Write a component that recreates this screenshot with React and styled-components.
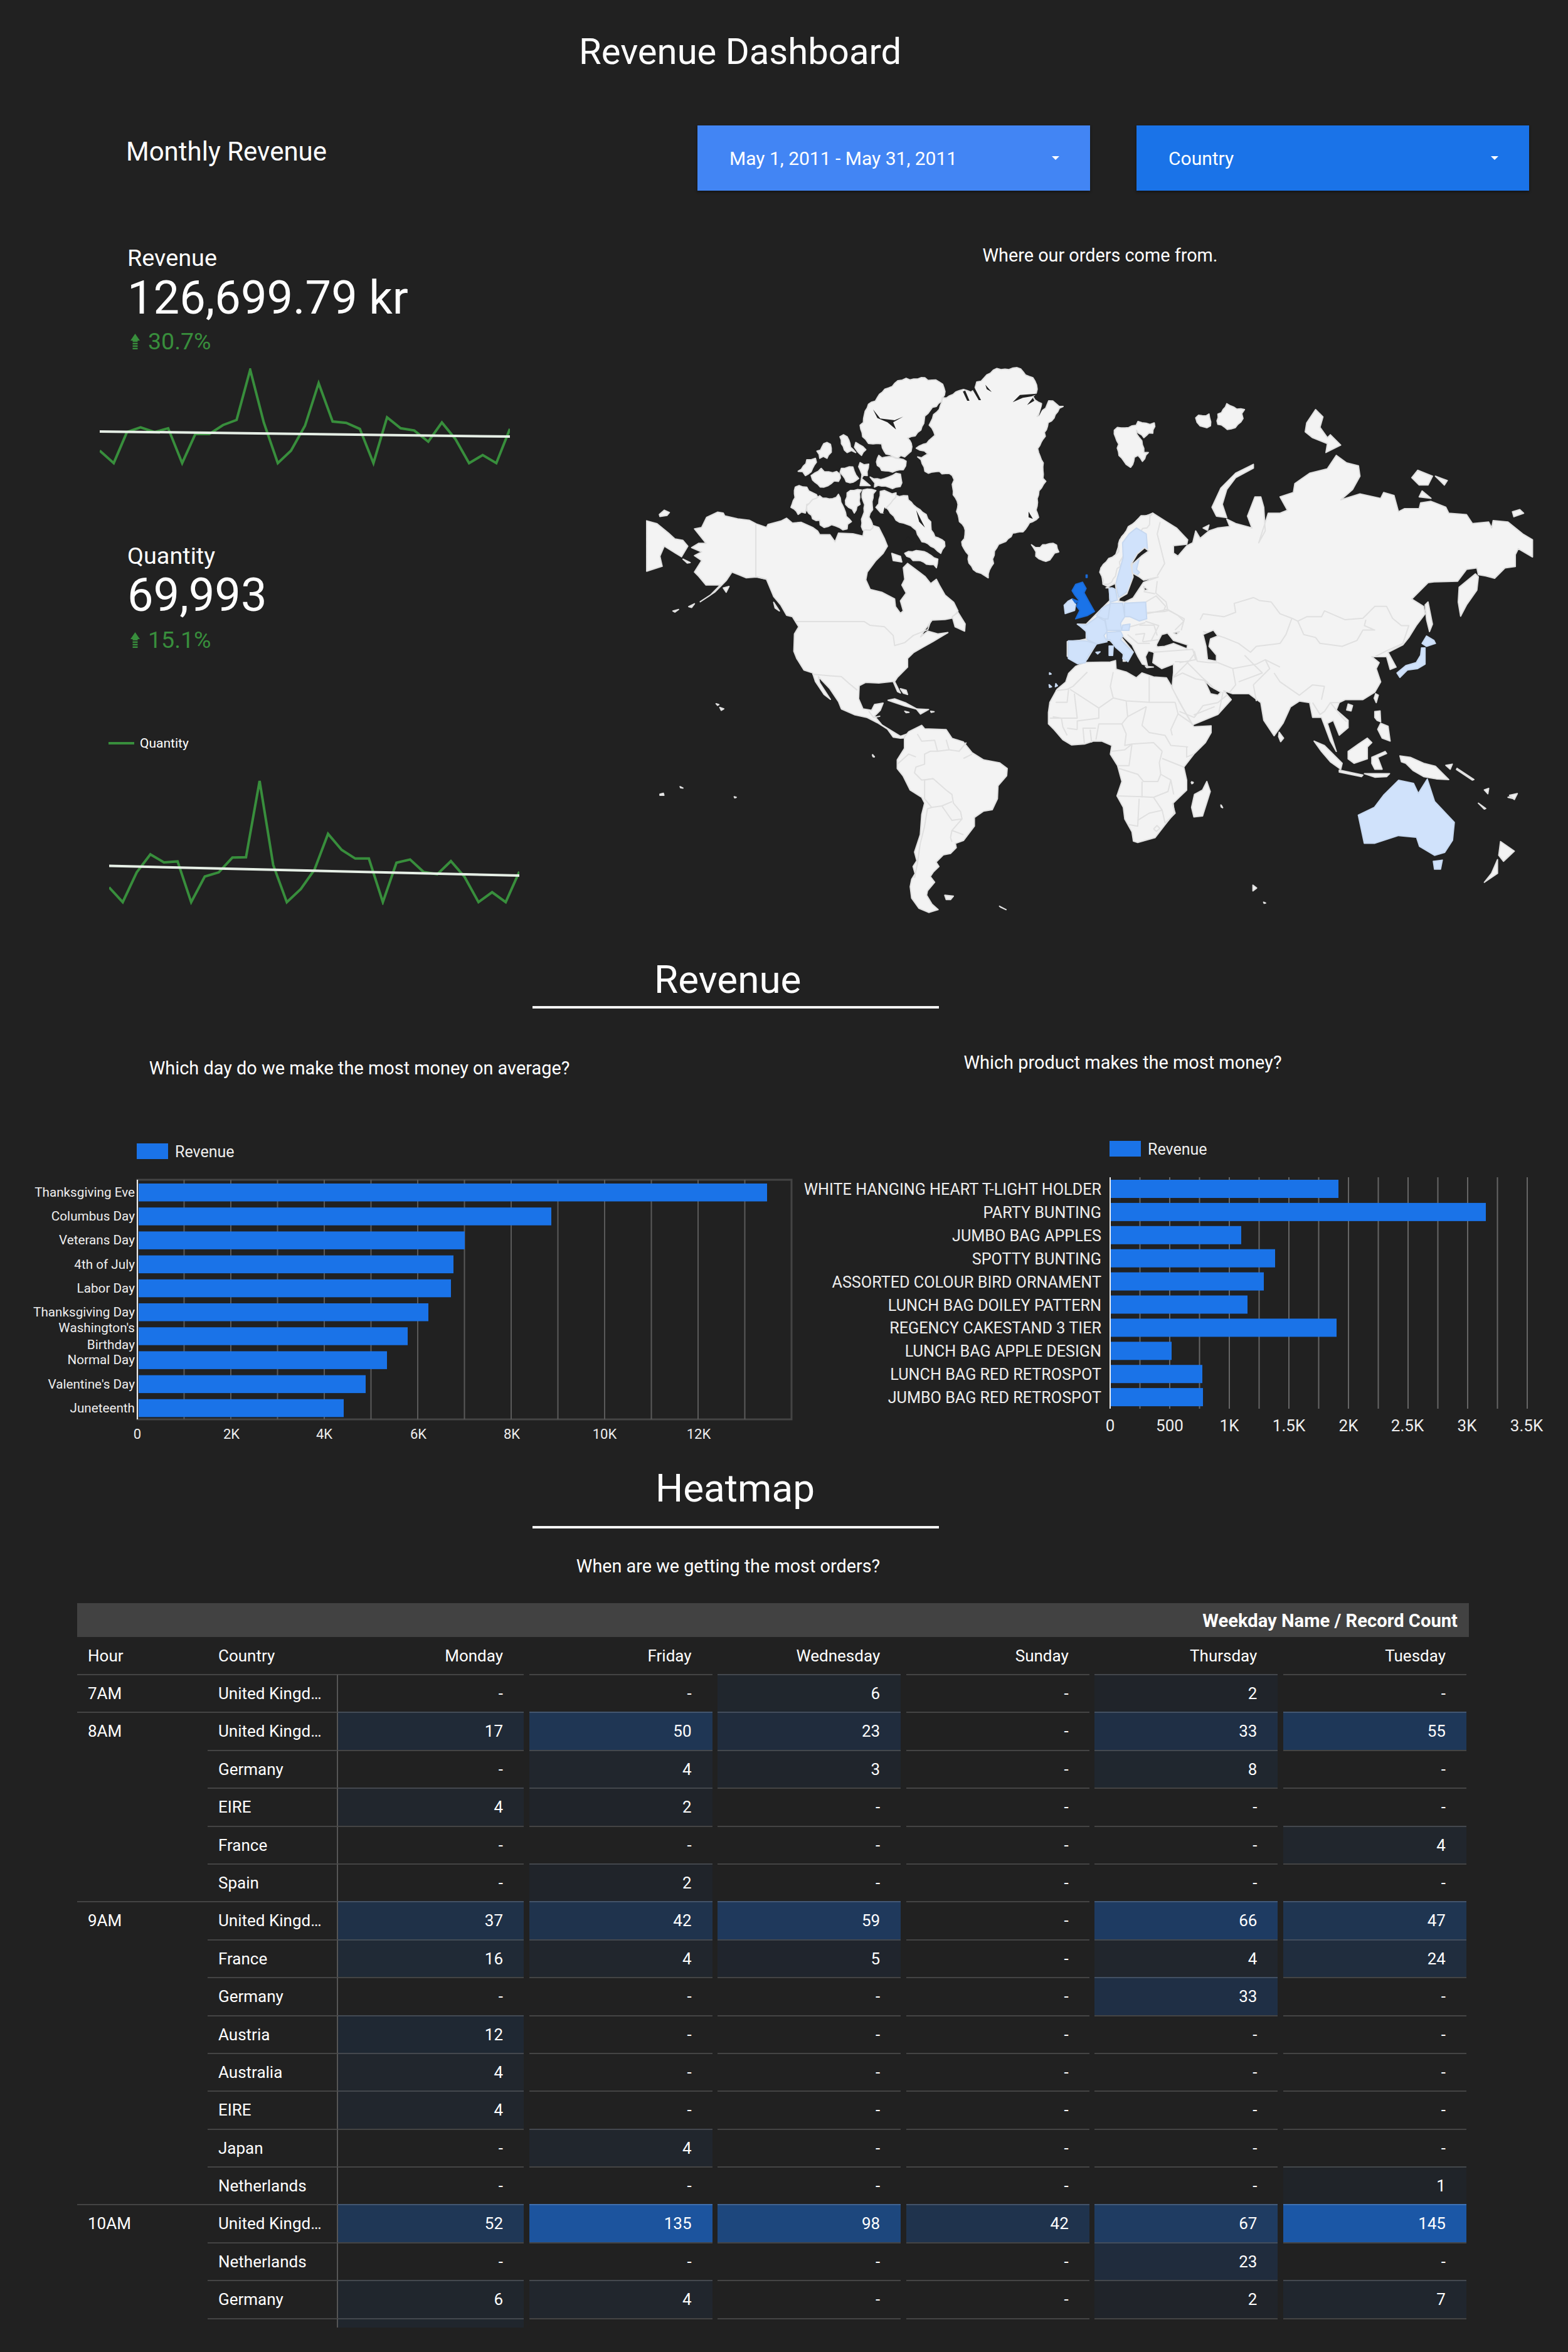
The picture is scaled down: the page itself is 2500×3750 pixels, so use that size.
import React from 'react';
import styled, { createGlobalStyle } from 'styled-components';

const GlobalStyle = createGlobalStyle`
  html, body { margin: 0; padding: 0; background: #212121; }
  body { font-family: Roboto, "Liberation Sans", sans-serif; color: #fff; }
`;

const Page = styled.div`
  width: 2500px;
  height: 3750px;
  overflow: hidden;
  background: #212121;
`;

const Title = styled.h1`
  margin: 0;
  height: 200px;
  padding: 48px 0 0 923px;
  box-sizing: border-box;
  font-size: 58px;
  line-height: 68px;
  font-weight: 400;
`;

const TopRow = styled.div`
  display: flex;
  align-items: center;
  height: 104px;
  padding-left: 201px;
`;

const SubTitle = styled.div`
  flex: none;
  width: 911px;
  font-size: 42px;
  line-height: 56px;
  margin-top: -20px;
`;

const Select = styled.div`
  flex: none;
  display: flex;
  align-items: center;
  justify-content: space-between;
  width: 626px;
  height: 104px;
  margin-right: 74px;
  padding: 0 49px 0 51px;
  box-sizing: border-box;
  background: ${(p) => p.$bg};
  box-shadow: 0 2px 4px rgba(0, 0, 0, 0.45);
  font-size: 30px;
`;

const Caret = styled.span`
  width: 0;
  height: 0;
  border-left: 6px solid transparent;
  border-right: 6px solid transparent;
  border-top: 6px solid #fff;
`;

const Overview = styled.div`
  display: flex;
  height: 1166px;
`;

const KpiColumn = styled.div`
  width: 1030px;
  flex: none;
`;

const Kpi = styled.div`
  padding-top: ${(p) => p.$top}px;
  padding-left: 203px;
`;

const KpiLabel = styled.div`
  font-size: 37.8px;
  line-height: 40px;
`;

const KpiValue = styled.div`
  margin-top: ${(p) => p.$gap}px;
  font-size: 74px;
  line-height: 80px;
`;

const Delta = styled.div`
  display: flex;
  align-items: center;
  gap: 13px;
  margin-top: ${(p) => p.$gap}px;
  padding-left: 5px;
  color: #388e3c;
  font-size: 37.5px;
  line-height: 40px;
`;

const Spark = styled.svg`
  display: block;
  width: 654px;
  height: ${(p) => p.$h}px;
  margin-left: ${(p) => p.$x}px;
  margin-top: ${(p) => p.$top}px;
  polyline, line { vector-effect: non-scaling-stroke; fill: none; }
`;

const LegendRow = styled.div`
  display: flex;
  align-items: center;
  gap: 9px;
  margin: 130px 0 0 173px;
  font-size: 21px;
  line-height: 30px;
`;

const LegendLine = styled.span`
  width: 41px;
  height: 4px;
  background: #388e3c;
`;

const MapColumn = styled.div`
  flex: 1;
`;

const Caption = styled.div`
  font-size: 28.8px;
  line-height: 40px;
  text-align: center;
  width: ${(p) => p.$width}px;
  box-sizing: border-box;
  padding-top: ${(p) => p.$top}px;
`;

const MapSvg = styled.svg`
  display: block;
  width: 1420px;
  height: 900px;
  margin-top: 143px;
  * { vector-effect: non-scaling-stroke; stroke-linejoin: round; }
`;

const SectionHeading = styled.h2`
  margin: 0;
  padding-left: ${(p) => p.$x}px;
  padding-top: ${(p) => p.$top}px;
  font-size: 62px;
  line-height: 70px;
  font-weight: 400;
`;

const Rule = styled.div`
  width: 648px;
  height: 4px;
  margin-left: 849px;
  margin-top: ${(p) => p.$top}px;
  background: #f4f4f4;
`;

const ChartRow = styled.div`
  display: flex;
`;

const ChartColumn = styled.div`
  width: ${(p) => p.$width}px;
  flex: none;
`;

const Question = styled.div`
  width: ${(p) => p.$width}px;
  height: 192px;
  padding-top: ${(p) => p.$top}px;
  box-sizing: border-box;
  font-size: 28.9px;
  line-height: 40px;
  text-align: center;
`;

const ChartSvg = styled.svg`
  display: block;
  width: ${(p) => p.$width}px;
  height: 510px;
  text { fill: #eee; font-family: Roboto, "Liberation Sans", sans-serif; }
`;

const Table = styled.div`
  width: 2219px;
  margin: 39px 0 0 123px;
`;

const TableBand = styled.div`
  height: 54px;
  padding-right: 18px;
  background: #424242;
  font-size: 29.2px;
  font-weight: 700;
  line-height: 56px;
  text-align: right;
`;

const ROW_COLUMNS = '208px 208px 296px repeat(5, 300.6px)';

const HeaderRow = styled.div`
  display: grid;
  width: 2215px;
  grid-template-columns: ${ROW_COLUMNS};
  height: 59px;
  font-size: 26px;
  align-items: center;
`;

const HeadCell = styled.div`
  padding: 0 ${(p) => (p.$right ? 33 : 0)}px 0 ${(p) => (p.$right ? 0 : 17)}px;
  text-align: ${(p) => (p.$right ? 'right' : 'left')};
`;

const BodyRow = styled.div`
  display: grid;
  width: 2215px;
  grid-template-columns: ${ROW_COLUMNS};
  height: ${(p) => (p.$partial ? 15 : 60.4)}px;
  font-size: 26px;
`;

const HourCell = styled.div`
  padding-left: 17px;
  border-top: 2px solid ${(p) => (p.$first ? 'rgba(255,255,255,0.16)' : 'transparent')};
  line-height: 58px;
  overflow: hidden;
`;

const CountryCell = styled.div`
  padding-left: 17px;
  box-sizing: border-box;
  border-top: 2px solid rgba(255, 255, 255, 0.16);
  border-right: 2px solid #555;
  line-height: 58px;
  white-space: nowrap;
`;

const ValueCell = styled.div`
  margin-left: ${(p) => (p.$first ? 0 : 8.6)}px;
  padding-right: 33px;
  box-sizing: border-box;
  border-top: 2px solid rgba(255, 255, 255, 0.16);
  background: ${(p) => (p.$value ? `rgba(26, 115, 232, ${Math.min(1, 0.04 + p.$value / 230)})` : 'transparent')};
  line-height: 58px;
  text-align: right;
  overflow: hidden;
`;

const SPARK_REVENUE = '250,1408 285,1447 318,1350 352,1335 387,1350 421,1338 456,1447 489,1356 524,1356 558,1328 592,1312 626,1155 660,1320 695,1447 728,1408 763,1330 797,1197 832,1317 866,1321 900,1340 934,1447 968,1304 1002,1338 1036,1345 1071,1380 1105,1320 1139,1372 1173,1447 1207,1422 1241,1447 1275,1340';
const SPARK_QUANTITY = '273,1205 307,1251 342,1158 376,1102 410,1127 444,1124 478,1251 512,1171 547,1158 581,1112 615,1111 649,873 683,1135 717,1251 752,1210 786,1150 820,1038 854,1088 888,1115 922,1115 957,1251 991,1128 1025,1118 1059,1157 1093,1164 1127,1123 1161,1172 1196,1251 1230,1220 1264,1251 1298,1156';

const UpArrow = () => (
  <svg width="15" height="25" viewBox="0 0 15 25">
    <path d="M7.5 0 L15 11 H11.5 V13 H3.5 V11 H0 Z" fill="#388e3c" />
    <rect x="3.5" y="14.5" width="8" height="2.5" fill="#388e3c" />
    <rect x="3.5" y="18.5" width="8" height="2.5" fill="#388e3c" />
    <rect x="3.5" y="22.5" width="8" height="2.5" fill="#388e3c" />
  </svg>
);

const Sparkline = ({ points, trend, box, h, x, top }) => (
  <Spark viewBox={box} preserveAspectRatio="none" $h={h} $x={x} $top={top}>
    <polyline points={points} stroke="#388e3c" strokeWidth="4" />
    <line x1={trend[0]} y1={trend[1]} x2={trend[2]} y2={trend[3]} stroke="#e6efe6" strokeWidth="4" />
  </Spark>
);

// world map, traced per zoom crop so each group keeps the crop's own coordinates
const LAND = '#f3f3f3';
const EDGE = '#e0e0e0';
const SEA = '#212121';
const PALE = '#d0e2fb';

// zigzags long edges, the arctic coasts in the picture are all spikes
const rough = (pts, amp) => {
  const xy = pts.split(' ').map((p) => p.split(',').map(Number));
  const out = [];
  xy.forEach(([x, y], i) => {
    const [nx, ny] = xy[(i + 1) % xy.length];
    const len = Math.hypot(nx - x, ny - y);
    const steps = Math.max(1, Math.round(len / 13));
    for (let s = 0; s < steps; s++) {
      const wob = s === 0 ? 0 : amp * Math.sin(x * 0.7 + y * 1.3 + s * 2.4) * (s % 2 ? 1 : -0.5);
      out.push(`${(x + ((nx - x) * s) / steps + (-(ny - y) / len) * wob).toFixed(1)},${(y + ((ny - y) * s) / steps + ((nx - x) / len) * wob).toFixed(1)}`);
    }
  });
  return out.join(' ');
};

const ARCTIC = [
  '860,470 930,480 960,520 1000,560 1020,610 1058,640 1045,680 1010,655 980,640 960,600 930,580 890,565 870,540 855,520',
  '920,680 960,670 1000,680 1035,700 1030,730 985,710 940,695',
  '805,155 885,90 925,72 990,70 1040,85 1060,118 1030,170 1000,195 965,260 930,280 945,310 920,345 895,350 855,335 840,300 810,300 785,285 765,235 790,175',
  '830,340 890,350 925,360 915,390 840,392 825,375',
  '550,395 580,355 610,350 600,385 575,410',
  '615,325 650,295 665,315 650,350 625,350',
  '595,410 630,385 670,400 695,405 690,430 640,450 600,425',
  '695,275 720,275 750,330 720,330',
  '750,295 785,320 770,340 755,325',
  '700,385 740,380 760,420 730,435 705,410',
  '765,365 795,370 790,410 770,420',
  '800,415 850,420 905,405 910,435 890,450 815,450',
  '835,465 890,470 850,540 820,520',
  '775,460 820,462 800,540 810,590 775,600',
  '525,520 540,450 580,450 620,490 580,510 575,540 550,545',
  '590,505 625,480 670,490 690,475 705,515 735,570 720,595 680,585 640,590 625,565 600,560 580,530',
  '720,470 770,460 765,510 745,540 715,510',
  '1050,140 1110,115 1150,120 1170,85 1205,60 1240,38 1310,35 1365,70 1380,110 1365,135 1395,160 1380,205 1420,150 1470,170 1430,220 1405,260 1385,330 1410,430 1380,490 1385,555 1340,595 1295,610 1240,660 1225,700 1210,765 1170,745 1140,700 1118,640 1130,600 1110,570 1105,510 1085,440 1085,410 1040,395 990,395 965,345 1000,335 960,315 1025,270 1005,235 1040,180',
  '1360,650 1390,660 1435,645 1455,675 1410,708 1375,690',
];

const ARCTIC_SLITS = [
  '810,180 835,212 885,218 915,205 880,225 890,250 860,225 825,210',
  '1130,115 1145,150 1137,150 1122,118',
  '1160,100 1185,148 1177,148 1152,105',
  '1200,95 1222,120 1205,110',
  '1295,155 1320,130 1385,125 1360,135 1330,140',
  '1345,165 1365,140 1370,150',
  '1385,205 1400,155 1408,160',
  '1350,535 1365,560 1350,555',
  '960,530 990,590 970,570',
  '930,620 950,640 920,640',
  '850,520 870,555 845,540',
];

const AMERICAS_NORTH = [
  '24,567 60,577 100,610 122,630 150,635 167,655 145,692 125,680 85,655 70,690 78,725 24,742',
  '68,545 85,530 103,538 95,548 70,552',
  '190,595 215,590 232,555 270,537 290,540 295,550 340,560 380,565 405,578 440,590 445,580 490,568 510,558 530,575 560,572 600,590 618,603 625,615 660,615 678,640 690,610 740,612 775,620 780,590 800,580 830,590 850,630 860,655 845,680 820,705 790,745 785,772 800,805 840,815 885,838 888,865 905,888 915,880 905,845 925,818 910,790 920,770 915,730 930,715 970,745 990,760 1010,785 1030,770 1040,790 1060,825 1090,850 1105,880 1085,905 1060,910 1015,912 990,945 975,970 1000,950 1035,960 1070,955 1020,985 985,1005 950,1025 930,1045 930,1075 895,1110 885,1125 905,1165 895,1160 880,1125 830,1130 785,1128 762,1140 760,1185 775,1220 805,1225 815,1205 845,1200 835,1225 815,1245 840,1275 880,1300 905,1315 925,1308 930,1320 905,1322 880,1318 860,1290 825,1268 790,1250 745,1240 700,1220 690,1195 660,1150 620,1108 625,1130 662,1187 640,1170 610,1125 600,1095 570,1085 545,1045 535,1020 537,960 552,935 530,900 510,895 490,860 465,830 440,770 405,762 370,765 345,755 320,745 300,775 260,815 210,848 245,825 280,790 268,790 230,790 205,760 190,745 215,705 190,688 215,675 180,660 205,645 230,645',
  '875,680 905,690 910,710 880,705',
  '770,420 800,445 765,445',
  '862,1190 885,1185 925,1200 965,1222 920,1210',
  '960,1220 1003,1222 975,1238',
  '920,1228 935,1232 925,1233',
  '1010,1228 1022,1230 1012,1232',
  '905,1150 925,1155 930,1170 915,1165',
  '1085,900 1105,885 1130,925 1128,950 1095,935',
  '465,850 485,880 470,870',
  '170,865 190,855 180,868',
  '115,880 135,875 122,884',
  '150,700 175,712 165,714',
  '290,800 310,795 300,815',
  '265,1202 275,1205 270,1208',
  '278,1215 292,1220 283,1225',
  '70,1516 82,1513 84,1520 70,1520',
  '140,1490 150,1495 142,1494',
  '328,1525 335,1527 330,1529',
  '808,1380 815,1386 810,1386',
];

const AMERICAS_NORTH_BORDERS = [
  '403,580 403,760 440,770',
  '540,917 780,917 800,930 850,935 880,965 885,1000 920,990 950,965 1000,945 1010,915',
  '600,1100 660,1105 700,1108 725,1130 755,1155',
  '795,1228 812,1250 835,1245',
];

const SOUTH_ATLANTIC = [
  '135,250 150,232 195,210 205,222 280,225 300,255 340,268 370,305 410,330 465,340 492,360 490,385 460,420 458,465 440,503 410,508 378,530 378,560 340,610 312,620 315,635 295,655 270,660 245,685 255,700 235,720 225,735 240,755 215,785 212,800 230,830 252,850 220,860 185,845 160,810 155,770 160,745 172,725 165,700 178,680 170,650 190,590 195,520 205,480 195,460 155,435 130,385 110,360 110,330 135,290',
  '635,165 640,130 665,85 695,60 705,30 730,5 760,-8 850,-10 868,-15 870,15 905,25 940,45 960,28 1000,42 1045,45 1060,70 1090,130 1130,200 1140,215 1200,212 1200,235 1180,270 1140,310 1105,355 1115,400 1115,435 1068,480 1072,515 1040,555 1005,600 945,617 930,612 925,580 900,535 895,495 873,455 890,405 875,350 850,310 855,280 820,265 790,265 760,275 715,278 685,260 655,225 635,205',
  '1185,405 1197,440 1170,525 1140,528 1132,495 1142,450 1170,435',
  '275,800 305,803 295,815 280,815',
  '465,838 488,850 470,842',
  '25,312 30,320 26,318',
  '1345,765 1358,775 1345,785',
  '1382,824 1389,827 1384,828',
  '1235,487 1240,496 1236,494',
  '1132,406 1138,408 1134,411',
];

const SOUTH_ATLANTIC_BORDERS = [
  '180,240 195,265 240,262 250,300 225,300 205,310 205,345 175,355 170,375 195,400 235,395 280,435 300,450 305,480 330,510 335,535 300,575 295,600 300,615',
  '230,495 215,500 205,560 190,620 180,690 170,740',
  '235,395 205,400 205,465 230,495 265,490 300,475',
  '110,345 150,310 175,320',
  '280,260 290,295 325,300 350,270',
  '250,300 290,295',
  '340,325 370,310',
  '265,490 300,540 335,535',
  '300,575 340,590',
  '770,25 720,75 700,85 660,90',
  '710,85 810,150 860,115 850,75 860,25',
  '660,130 700,130 705,85',
  '725,100 735,185 680,185 650,180',
  '810,150 810,185 735,195 735,225',
  '860,115 905,125 985,130 1075,130',
  '985,40 985,130',
  '905,125 910,180 890,205 810,205 800,260',
  '975,145 960,210 985,235 1040,245 1060,280 1120,285',
  '910,180 975,145',
  '1075,130 1085,170 1060,225 1065,245',
  '1085,170 1135,205',
  '890,205 905,240 900,280 925,275 1000,270 1030,300',
  '855,300 900,295 925,275',
  '925,275 915,350 875,350',
  '1030,300 1020,340 1025,380 1060,400 1070,450',
  '1030,325 1105,355',
  '1115,285 1115,320 1140,310',
  '880,360 945,380 965,405 1015,405 1025,380',
  '873,455 960,458 1000,460 1050,440 1060,400',
  '960,405 960,460',
  '950,465 945,560 915,555',
  '1000,460 1030,505 1040,550',
  '1040,550 1075,515 1065,480',
  '945,540 985,515 1030,505',
  '1000,570 1012,558 1022,568 1010,578 1000,570',
  '760,275 755,220 800,220',
  '780,225 785,270',
  '640,185 680,185 685,215 700,245',
  '735,225 700,220',
];

const EURASIA = [
  '250,420 290,445 330,470 368,510 365,525 320,530 320,555 335,565 365,530 385,520 395,480 410,505 440,480 470,470 510,465 500,440 530,455 585,470 570,430 595,365 615,365 625,400 630,480 608,520 640,420 680,420 705,410 680,365 725,350 730,320 780,285 840,270 870,225 905,250 945,260 950,295 925,340 885,375 950,355 1020,370 1030,350 1065,360 1080,415 1100,405 1150,405 1155,385 1190,380 1240,400 1250,420 1310,425 1330,455 1385,450 1395,470 1400,445 1450,450 1500,490 1533,510 1533,568 1485,540 1475,560 1475,600 1440,605 1405,640 1375,632 1350,628 1345,605 1310,610 1280,650 1200,652 1180,655 1125,710 1165,735 1170,760 1140,800 1115,840 1095,865 1045,890 1072,940 1052,948 1040,905 1005,905 990,905 1015,925 1005,945 1020,990 1000,1025 960,1050 900,1050 880,1060 870,1085 910,1120 910,1145 880,1170 860,1120 840,1130 870,1225 850,1190 820,1110 790,1110 780,1060 745,1055 715,1075 690,1130 660,1172 625,1120 615,1060 575,1030 520,1030 490,1020 515,1050 470,1100 385,1135 350,1075 315,1010 320,958 320,930 280,945 250,925 255,890 235,885 225,905 232,935 215,930 200,905 180,865 148,835 143,838 184,889 180,895 165,885 158,920 150,920 150,895 120,865 105,850 85,850 60,861 28,914 -3,928 -39,903 -39,854 0,850 25,845 25,815 -5,795 25,795 45,775 75,745 105,715 103,675 113,672 128,700 126,656 99,669 82,660 75,605 125,560 145,500 200,440',
  '1285,670 1340,625 1350,635 1345,680 1310,730 1290,768 1282,720',
  '1170,730 1180,720 1195,795 1185,820 1175,780',
  '450,400 480,335 530,285 590,255 590,268 530,300 500,340 485,390 500,435 465,430',
  '770,115 800,70 825,95 815,130 840,165 850,155 885,190 835,215 840,185 790,165 765,145',
  '1125,300 1145,275 1195,295 1180,325 1150,325',
  '1205,295 1245,310 1235,325',
  '1160,345 1190,370 1150,365',
  '1465,415 1490,408 1503,420 1470,432',
  '420,470 440,460 435,478',
  '1003,1030 1012,1035 1005,1060 998,1045',
  '910,1065 925,1070 920,1088 905,1085',
  '677,1160 692,1180 682,1192 675,1175',
  '1000,1090 1018,1088 1020,1125 1008,1120 1000,1110',
  '1020,1130 1045,1140 1052,1190 1025,1180 1010,1150',
  '975,1180 990,1195 975,1210 975,1250 930,1265 910,1250 910,1225 945,1200',
  '795,1190 830,1205 865,1240 890,1265 885,1285 850,1260 820,1225',
  '880,1288 960,1305 955,1310 880,1295',
  '965,1300 1050,1300 1040,1310 1000,1312',
  '990,1245 1035,1225 1040,1232 1010,1245 1025,1285 1000,1285 990,1265',
  '1085,1240 1120,1245 1165,1265 1205,1275 1250,1320 1210,1318 1165,1310 1130,1290 1105,1265 1090,1260',
  '1240,1272 1262,1268 1255,1285',
  '1278,1282 1335,1320 1330,1322 1276,1286',
  '1350,1400 1375,1418 1370,1420',
  '1370,1355 1385,1350 1382,1368',
  '1450,1380 1480,1370 1470,1385',
  '380,1330 386,1332 382,1334',
  '480,1406 485,1414 481,1412',
  '225,937 252,940 230,942',
];

const EURASIA_ROUGH = [
  '75,605 125,560 145,500 200,440 250,420 230,470 160,520 140,600 100,660 82,660',
  '120,140 180,125 200,110 255,115 250,150 220,165 195,140 220,215 235,215 215,245 200,225 175,265 160,255 130,200',
  '395,98 440,85 445,125 410,125',
  '470,85 500,50 560,70 555,100 515,135 470,120',
];

const EURASIA_SEAS = [
  '420,830 455,815 470,835 445,845 440,870 465,900 465,920 435,915 430,870',
  '262,865 280,830 300,825 320,850 368,865 365,878 320,860 290,870 265,872',
  '320,825 340,820 330,830',
  '425,985 445,1005 480,1025 470,1035 445,1030',
];

const EURASIA_BORDERS = [
  '410,780 420,760 490,770 530,755 525,725 590,705 610,715 650,720 680,760 720,775 740,785',
  '740,785 770,770 820,770 830,750 900,780 960,775 1000,735 1040,735 1060,775 1090,800 1115,800 1095,860 1040,885 1000,905',
  '740,785 760,830 800,840 815,860 890,870 940,850 960,815 1000,815 965,800 970,780',
  '720,775 700,830 680,860 600,870 580,890 540,860 490,840 460,830 420,820',
  '390,885 400,920 440,925 470,925 520,945 530,1000 510,1025',
  '250,890 385,880 395,915 340,925',
  '320,975 350,960 395,980 425,985',
  '520,945 600,930 630,915 645,945 590,1000 600,1055',
  '680,940 630,915',
  '660,960 680,990 745,1035 790,1000 830,1005 820,1050',
  '790,1060 815,1100 830,1090 850,1060 880,1060',
  '850,1060 890,1110 905,1125',
  '340,1090 390,1110 420,1070 470,1060 500,1035',
  '275,450 265,490 290,590 265,632',
  '265,650 260,690 295,720 300,745 335,765 355,785 325,815',
  '230,760 300,745',
  '225,785 270,800 245,850',
  '150,810 225,790',
  '165,830 200,860 240,860',
  '560,900 620,960 540,990',
];

const EUROPE_SEAS = [
  '400,325 430,330 470,310 500,265 520,235 590,210 520,225 500,210 465,190 465,150 510,110 545,85 525,70 490,100 460,150 470,210 440,290 405,310',
  '520,255 540,270 525,275',
  '340,262 385,240 392,300 378,265 355,262',
];

const EUROPE_BORDERS = [
  '535,380 620,375 640,370 715,410 700,465',
  '530,330 580,300 625,350 615,375',
  '520,280 575,290',
  '500,440 570,440 585,490',
  '515,520 590,510',
  '480,485 525,480 515,520',
  '670,615 735,615 765,575',
  '660,690 730,620 800,690 860,745',
  '860,830 760,870',
  '900,760 880,860',
];

const EUROPE_PALE = [
  '355,265 370,262 385,270 395,320 360,330',
  '360,335 420,335 430,400 410,430 415,465 345,465 335,410 318,395',
  '320,360 345,345 360,340 350,410 330,410 295,395',
  '205,435 245,440 300,400 335,420 345,470 330,490 345,520 295,530 250,510 245,470',
  '428,335 530,330 535,410 500,420 455,400 430,400',
  '420,440 455,435 450,465 415,465',
  '345,475 410,470 420,490 410,510 470,570 445,615 420,600 425,580 385,545 360,510 345,510',
  '355,540 375,540 372,585 355,585',
  '292,570 312,568 300,578',
  '160,515 240,515 295,530 260,580 240,620 205,625 160,600',
  '180,315 195,340 190,370 145,385 140,345 160,325',
  '70,668 78,674 70,676',
  '68,725 80,735 70,738',
  '100,720 108,730 98,735',
];

const UK_PARTS = [
  '228,235 245,265 235,285 265,340 285,375 250,395 195,410 215,370 200,350 210,320 190,295 178,275 195,245',
  '180,315 205,325 195,335',
  '245,200 250,200 250,212 245,212',
];

const JAPAN_AND_SWEDEN = [
  '130,640 150,570 148,520 170,490 195,470 228,490 232,540 205,570 195,610 205,620 180,650 170,680 135,705 125,660',
  '1160,860 1175,835 1200,850 1205,860 1175,870',
  '1158,875 1170,875 1170,930 1145,945 1110,950 1085,975 1075,960 1105,935 1140,925 1155,900',
];

const OCEANIA_PALE = [
  '1218,1358 1245,1345 1260,1325 1285,1300 1310,1305 1318,1322 1333,1298 1345,1335 1378,1370 1375,1400 1362,1420 1345,1425 1320,1410 1315,1395 1285,1392 1245,1405 1228,1405',
  '1343,1435 1358,1433 1355,1448 1345,1448',
];

const OCEANIA_LAND = [
  '1455,1402 1478,1418 1460,1435 1452,1425',
  '1450,1432 1440,1455 1428,1470 1450,1455',
  '1470,1325 1483,1322 1478,1332',
];

const Shapes = ({ list, fill, stroke, amp }) =>
  list.map((pts, i) => (
    <polygon key={i} points={amp ? rough(pts, amp) : pts} fill={fill} stroke={stroke} strokeWidth="2" />
  ));

const Lines = ({ list }) =>
  list.map((pts, i) => <polyline key={i} points={pts} fill="none" stroke="#e0e0e0" strokeWidth="2" />);

const WorldMap = () => (
  <MapSvg viewBox="1030 570 1420 900">
    <g transform="translate(1020 570) scale(0.4592)">
      <Shapes list={AMERICAS_NORTH} fill={LAND} stroke={EDGE} />
      <Shapes list={ARCTIC} fill={LAND} stroke={EDGE} amp={7} />
      <Shapes list={ARCTIC_SLITS} fill={SEA} stroke="none" />
      <Lines list={AMERICAS_NORTH_BORDERS} />
    </g>
    <g transform="translate(1380 1060) scale(0.4592)">
      <Shapes list={SOUTH_ATLANTIC} fill={LAND} stroke={EDGE} />
      <Lines list={SOUTH_ATLANTIC_BORDERS} />
    </g>
    <g transform="translate(1720 620) scale(0.4719)">
      <Shapes list={EURASIA} fill={LAND} stroke={EDGE} />
      <Shapes list={EURASIA_ROUGH} fill={LAND} stroke={EDGE} amp={7} />
      <Lines list={EURASIA_BORDERS} />
      <Shapes list={EURASIA_SEAS} fill={SEA} stroke={EDGE} />
      <Shapes list={JAPAN_AND_SWEDEN} fill={PALE} stroke="#c6d8f0" />
    </g>
    <g transform="translate(1650 850) scale(0.3333)">
      <Lines list={EUROPE_BORDERS} />
      <Shapes list={EUROPE_SEAS} fill={SEA} stroke={EDGE} />
      <Shapes list={EUROPE_PALE} fill={PALE} stroke="#c6d8f0" />
      <Shapes list={UK_PARTS} fill="#1a73e8" stroke="#1a6ad6" />
    </g>
    <g transform="translate(1000 0) scale(0.957)">
      <Shapes list={OCEANIA_PALE} fill={PALE} stroke="#c6d8f0" />
      <Shapes list={OCEANIA_LAND} fill={LAND} stroke={EDGE} />
    </g>
  </MapSvg>
);

const DAY_BARS = [
  ['Thanksgiving Eve', 1223],
  ['Columbus Day', 879],
  ['Veterans Day', 741],
  ['4th of July', 723],
  ['Labor Day', 719],
  ['Thanksgiving Day', 683],
  [["Washington's", 'Birthday'], 650],
  ['Normal Day', 617],
  ["Valentine's Day", 583],
  ['Juneteenth', 548],
];

const DAY_TICKS = [['0', 219], ['2K', 369], ['4K', 517], ['6K', 667], ['8K', 816], ['10K', 964], ['12K', 1114]];

const PRODUCT_BARS = [
  ['WHITE HANGING HEART T-LIGHT HOLDER', 2134],
  ['PARTY BUNTING', 2369],
  ['JUMBO BAG APPLES', 1979],
  ['SPOTTY BUNTING', 2033],
  ['ASSORTED COLOUR BIRD ORNAMENT', 2015],
  ['LUNCH BAG DOILEY PATTERN', 1989],
  ['REGENCY CAKESTAND 3 TIER', 2131],
  ['LUNCH BAG APPLE DESIGN', 1868],
  ['LUNCH BAG RED RETROSPOT', 1917],
  ['JUMBO BAG RED RETROSPOT', 1918],
];

const PRODUCT_TICKS = [['0', 1770], ['500', 1865], ['1K', 1960], ['1.5K', 2055], ['2K', 2150], ['2.5K', 2244], ['3K', 2339], ['3.5K', 2434]];

const DayChart = () => (
  <ChartSvg viewBox="0 1800 1270 510" $width={1270}>
    <rect x="218" y="1823" width="50" height="25" fill="#1a73e8" />
    <text x="279" y="1845" fontSize="25">Revenue</text>
    <rect x="219" y="1881" width="1043" height="382" fill="none" stroke="#444" strokeWidth="3" />
    {Array.from({ length: 13 }, (_, i) => (
      <line key={i} x1={219 + 74.5 * (i + 1)} x2={219 + 74.5 * (i + 1)} y1="1881" y2="2263" stroke="#5a5a5a" strokeWidth="2" />
    ))}
    {DAY_BARS.map(([label, end], i) => {
      const y = 1887 + 38.2 * i;
      return (
        <g key={i}>
          <rect x="221" y={y} width={end - 221} height="28.5" fill="#1a73e8" />
          {Array.isArray(label) ? (
            <text textAnchor="end" fontSize="20.7">
              <tspan x="215" y={y + 8}>{label[0]}</tspan>
              <tspan x="215" y={y + 35}>{label[1]}</tspan>
            </text>
          ) : (
            <text x="215" y={y + 21} textAnchor="end" fontSize="20.7">{label}</text>
          )}
        </g>
      );
    })}
    <line x1="219" x2="219" y1="1881" y2="2263" stroke="#eee" strokeWidth="2" />
    {DAY_TICKS.map(([t, x]) => (
      <text key={t} x={x} y="2294" textAnchor="middle" fontSize="22">{t}</text>
    ))}
  </ChartSvg>
);

const ProductChart = () => (
  <ChartSvg viewBox="1270 1800 1230 510" $width={1230}>
    <rect x="1769" y="1819" width="50" height="25" fill="#1a73e8" />
    <text x="1830" y="1841" fontSize="25">Revenue</text>
    {Array.from({ length: 14 }, (_, i) => (
      <line key={i} x1={1770 + 47.5 * (i + 1)} x2={1770 + 47.5 * (i + 1)} y1="1877" y2="2246" stroke="#666" strokeWidth="2" />
    ))}
    {PRODUCT_BARS.map(([label, end], i) => {
      const y = 1881 + 36.9 * i;
      return (
        <g key={label}>
          <rect x="1771" y={y} width={end - 1771} height="29" fill="#1a73e8" />
          <text x="1756" y={y + 24} textAnchor="end" fontSize="25.2">{label}</text>
        </g>
      );
    })}
    <line x1="1770" x2="1770" y1="1877" y2="2246" stroke="#eee" strokeWidth="2" />
    {PRODUCT_TICKS.map(([t, x]) => (
      <text key={t} x={x} y="2282" textAnchor="middle" fontSize="26">{t}</text>
    ))}
  </ChartSvg>
);

const DAYS = ['Monday', 'Friday', 'Wednesday', 'Sunday', 'Thursday', 'Tuesday'];

const UK = 'United Kingd…';

const ROWS = [
  ['7AM', UK, [0, 0, 6, 0, 2, 0]],
  ['8AM', UK, [17, 50, 23, 0, 33, 55]],
  ['', 'Germany', [0, 4, 3, 0, 8, 0]],
  ['', 'EIRE', [4, 2, 0, 0, 0, 0]],
  ['', 'France', [0, 0, 0, 0, 0, 4]],
  ['', 'Spain', [0, 2, 0, 0, 0, 0]],
  ['9AM', UK, [37, 42, 59, 0, 66, 47]],
  ['', 'France', [16, 4, 5, 0, 4, 24]],
  ['', 'Germany', [0, 0, 0, 0, 33, 0]],
  ['', 'Austria', [12, 0, 0, 0, 0, 0]],
  ['', 'Australia', [4, 0, 0, 0, 0, 0]],
  ['', 'EIRE', [4, 0, 0, 0, 0, 0]],
  ['', 'Japan', [0, 4, 0, 0, 0, 0]],
  ['', 'Netherlands', [0, 0, 0, 0, 0, 1]],
  ['10AM', UK, [52, 135, 98, 42, 67, 145]],
  ['', 'Netherlands', [0, 0, 0, 0, 23, 0]],
  ['', 'Germany', [6, 4, 0, 0, 2, 7]],
];

const App = () => (
  <Page>
    <GlobalStyle />
    <Title>Revenue Dashboard</Title>
    <TopRow>
      <SubTitle>Monthly Revenue</SubTitle>
      <Select $bg="#4285f4">May 1, 2011 - May 31, 2011<Caret /></Select>
      <Select $bg="#1a73e8">Country<Caret /></Select>
    </TopRow>
    <Overview>
      <KpiColumn>
        <Kpi $top={87}>
          <KpiLabel>Revenue</KpiLabel>
          <KpiValue $gap={4}>126,699.79 kr</KpiValue>
          <Delta $gap={9}><UpArrow />30.7%</Delta>
        </Kpi>
        <Sparkline points={SPARK_REVENUE} trend={[250, 1348, 1275, 1364]} box="250 1150 1025 310" h={158} x={159} top={23} />
        <Kpi $top={121}>
          <KpiLabel>Quantity</KpiLabel>
          <KpiValue $gap={3}>69,993</KpiValue>
          <Delta $gap={11}><UpArrow />15.1%</Delta>
        </Kpi>
        <LegendRow><LegendLine />Quantity</LegendRow>
        <Sparkline points={SPARK_QUANTITY} trend={[273, 1138, 1298, 1168]} box="273 865 1025 395" h={202} x={174} top={41} />
      </KpiColumn>
      <MapColumn>
        <Caption $width={1448} $top={83}>Where our orders come from.</Caption>
        <WorldMap />
      </MapColumn>
    </Overview>
    <SectionHeading $x={1043} $top={57}>Revenue</SectionHeading>
    <Rule $top={7} />
    <ChartRow>
      <ChartColumn $width={1270}>
        <Question $width={1146} $top={75}>Which day do we make the most money on average?</Question>
        <DayChart />
      </ChartColumn>
      <ChartColumn $width={1230}>
        <Question $width={1040} $top={66}>Which product makes the most money?</Question>
        <ProductChart />
      </ChartColumn>
    </ChartRow>
    <SectionHeading $x={1045} $top={28}>Heatmap</SectionHeading>
    <Rule $top={25} />
    <Caption $width={2322} $top={40}>When are we getting the most orders?</Caption>
    <Table>
      <TableBand>Weekday Name / Record Count</TableBand>
      <HeaderRow>
        <HeadCell>Hour</HeadCell>
        <HeadCell>Country</HeadCell>
        {DAYS.map((d) => (
          <HeadCell key={d} $right>{d}</HeadCell>
        ))}
      </HeaderRow>
      {ROWS.map(([hour, country, values], r) => (
        <BodyRow key={r}>
          <HourCell $first={!!hour}>{hour}</HourCell>
          <CountryCell>{country}</CountryCell>
          {values.map((v, i) => (
            <ValueCell key={i} $first={i === 0} $value={v}>{v || '-'}</ValueCell>
          ))}
        </BodyRow>
      ))}
      <BodyRow $partial>
        <HourCell />
        <CountryCell />
        {DAYS.map((d, i) => (
          <ValueCell key={d} $first={i === 0} $value={i === 0 ? 6 : 0} />
        ))}
      </BodyRow>
    </Table>
  </Page>
);

export default App;
